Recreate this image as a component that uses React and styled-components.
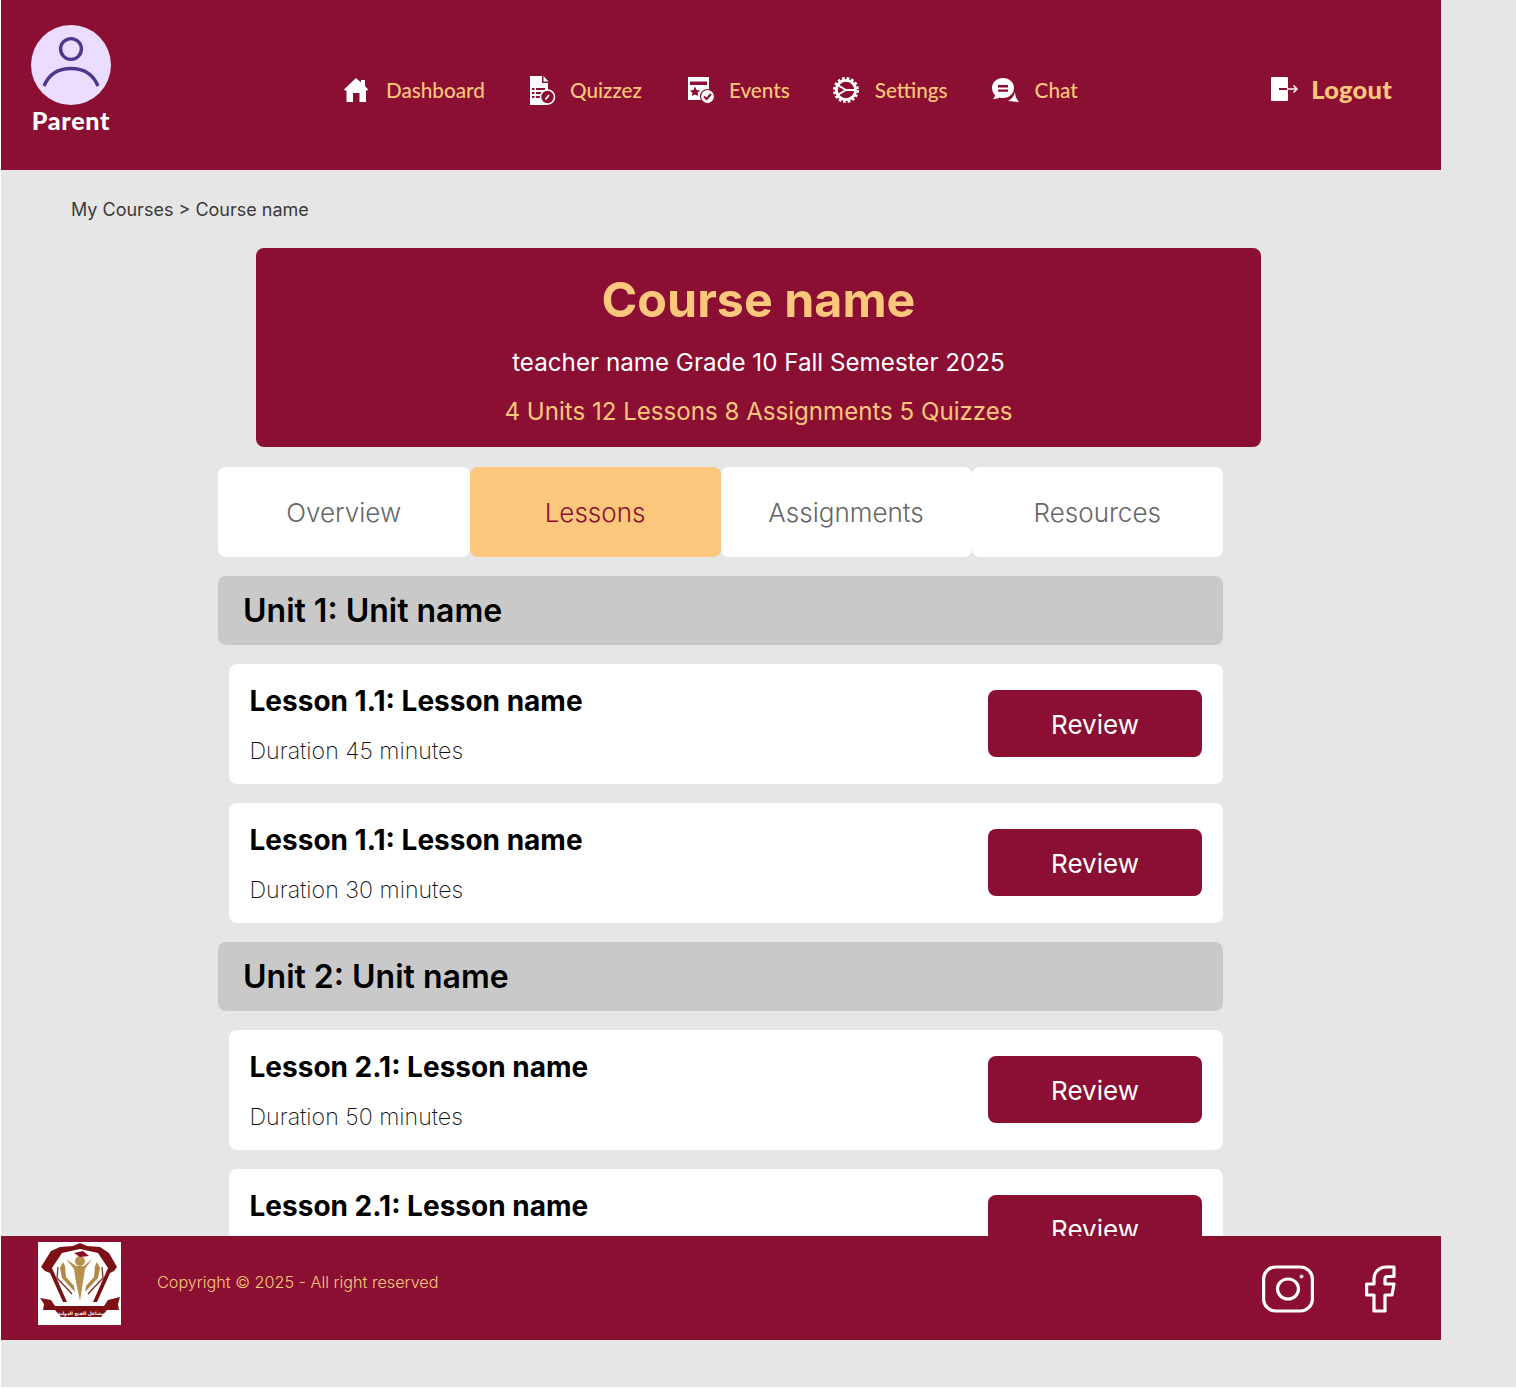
import React from "react";
import styled, { createGlobalStyle } from "styled-components";

const maroon = "#8a0f32";
const peach = "#fbc77c";

const Global = createGlobalStyle`
  html, body { margin: 0; padding: 0; background: #fff; }
  body { font-family: Inter, "Liberation Sans", sans-serif; }
  * { box-sizing: border-box; }
  svg { overflow: visible; flex-shrink: 0; }
`;

const Page = styled.div`
  margin-left: 1px;
  width: 1515px;
  height: 1387px;
  background: #e6e6e6;
  overflow: hidden;
`;

const Header = styled.header`
  width: 1440px;
  height: 170px;
  background: ${maroon};
  display: flex;
  align-items: flex-start;
  padding: 25px 49px 0 30px;
`;

const Profile = styled.div`
  width: 80px;
  display: flex;
  flex-direction: column;
  align-items: center;
`;

const Avatar = styled.div`
  width: 80px;
  height: 80px;
  border-radius: 50%;
  background: #eaddff;
  display: flex;
  align-items: center;
  justify-content: center;
`;

const Role = styled.div`
  font-family: Lato, sans-serif;
  font-weight: 900;
  font-size: 25px;
  letter-spacing: 0.7px;
  line-height: 30px;
  white-space: nowrap;
  color: #fff;
`;

const Nav = styled.nav`
  display: flex;
  align-items: center;
  gap: 43px;
  margin-left: 233px;
  margin-top: 50px;
`;

const NavItem = styled.a`
  display: flex;
  align-items: center;
  gap: 16px;
  font-family: Lato, sans-serif;
  font-weight: 500;
  font-size: 20.7px;
  line-height: 28px;
  color: ${peach};
`;

const Logout = styled.a`
  margin-left: auto;
  margin-top: 48px;
  display: flex;
  align-items: center;
  gap: 13px;
  font-family: Lato, sans-serif;
  font-weight: 900;
  font-size: 25.5px;
  letter-spacing: 0.2px;
  line-height: 32px;
  color: ${peach};
`;

const Main = styled.main`
  height: 1066px;
  overflow: hidden;
  padding-left: 217px;
`;

const Breadcrumb = styled.div`
  margin-left: -147px;
  padding-top: 29px;
  font-size: 18px;
  line-height: 22px;
  color: #3a3a3a;
`;

const CourseCard = styled.section`
  width: 1005px;
  height: 199px;
  margin: 27px 0 20px 38px;
  background: ${maroon};
  border-radius: 8px;
  display: flex;
  flex-direction: column;
  align-items: center;
  text-align: center;
`;

const CourseTitle = styled.h1`
  margin: 22px 0 0;
  font-size: 48.4px;
  line-height: 60px;
  font-weight: 700;
  color: ${peach};
`;

const CourseLine = styled.p`
  margin: ${(p) => p.$top}px 0 0;
  font-size: ${(p) => (p.$accent ? 24.1 : 24.2)}px;
  line-height: 30px;
  color: ${(p) => (p.$accent ? peach : "#fff")};
`;

const Tabs = styled.div`
  width: 1005px;
  display: grid;
  grid-template-columns: 251.5px 251px 251px 251.5px;
  margin-bottom: 19px;
`;

const Tab = styled.div`
  height: 90px;
  display: flex;
  align-items: center;
  justify-content: center;
  border-radius: 8px;
  font-size: 26px;
  font-weight: 300;
  background: ${(p) => (p.$active ? peach : "#fff")};
  color: ${(p) => (p.$active ? maroon : "#666")};
`;

const UnitBar = styled.h2`
  width: 1005px;
  height: 69px;
  margin: 0 0 19px;
  padding-left: 25px;
  display: flex;
  align-items: center;
  background: #c9c9c9;
  border-radius: 8px;
  font-size: 32px;
  font-weight: 600;
  color: #000;
`;

const LessonCard = styled.article`
  width: 994px;
  height: 120px;
  margin: 0 0 19px 11px;
  padding: 0 21px 0 20.5px;
  display: flex;
  align-items: flex-start;
  justify-content: space-between;
  background: #fff;
  border-radius: 8px;
`;

const LessonTitle = styled.h3`
  margin: 19px 0 0;
  font-size: 28px;
  line-height: 36px;
  font-weight: 700;
  color: #000;
`;

const Duration = styled.p`
  margin: 17px 0 0;
  font-size: 23.2px;
  line-height: 30px;
  font-weight: 200;
  color: #111;
`;

const ReviewButton = styled.button`
  width: 214px;
  height: 67px;
  margin-top: 26px;
  padding: 1px 0 0;
  border: 0;
  border-radius: 8px;
  background: ${maroon};
  color: #fff;
  font-family: inherit;
  font-size: 26px;
`;

const Footer = styled.footer`
  width: 1440px;
  height: 104px;
  background: ${maroon};
  display: flex;
  align-items: flex-start;
  padding: 6px 45px 0 37px;
`;

const Copyright = styled.span`
  margin: 28px 0 0 36px;
  font-size: 16.2px;
  line-height: 24px;
  font-weight: 300;
  color: ${peach};
`;

const Socials = styled.div`
  margin-left: auto;
  margin-top: 23px;
  display: flex;
  align-items: flex-start;
  gap: 51px;
`;

function HomeIcon() {
  return (
    <svg width="26" height="26" viewBox="0 0 26 26" fill="#fff">
      <path
        fillRule="evenodd"
        d="M12 1 L17 5.5 V3 H21 V9 L24 12.6 L23.2 13.5 H22 V25 H2.5 V13.5 H1 L0 12.6 Z M9 16 V25 H15.5 V16 Z"
      />
    </svg>
  );
}

function QuizIcon() {
  return (
    <svg width="26" height="30" viewBox="-1 0 26 30">
      <path d="M1 1 H13 V8 H19 V30 H1 Z" fill="#fff" />
      <path d="M14.5 1 L19.5 6.5 H14.5 Z" fill="#fff" />
      <path
        d="M3 13 h2.5 v2 H3 Z M7 13 h9 v2 H7 Z M3 17 h2.5 v2 H3 Z M7 17 h9 v2 H7 Z M3 21 h2.5 v2 H3 Z M7 21 h6 v2 H7 Z"
        fill={maroon}
      />
      <circle cx="18.5" cy="22" r="7" fill={maroon} stroke="#fff" strokeWidth="1.6" />
      <path d="M16.5 24.5 L20 20" stroke="#fff" strokeWidth="1.8" />
    </svg>
  );
}

function EventsIcon() {
  return (
    <svg width="28" height="28" viewBox="-3 0 28 28">
      <path d="M0 1 H21 V24 H0 Z" fill="#fff" />
      <path d="M2 5.5 H19 V9 H2 Z" fill={maroon} />
      <path d="M7 10.5 L8.6 14 L12 14.4 L9.6 16.8 L10.2 20 L7 18.4 L3.8 20 L4.4 16.8 L2 14.4 L5.4 14 Z" fill={maroon} />
      <circle cx="19.5" cy="20.5" r="7" fill="#fff" stroke={maroon} strokeWidth="1.2" />
      <path d="M16 20.5 L18.7 23 L23 18" fill="none" stroke={maroon} strokeWidth="2" />
    </svg>
  );
}

function GearIcon() {
  return (
    <svg width="26" height="26" viewBox="0 0 26 26" fill="none" stroke="#fff">
      <circle cx="13" cy="13" r="11.4" strokeWidth="3.2" strokeDasharray="2.6 1.9" />
      <circle cx="13" cy="13" r="9.6" strokeWidth="2.8" />
      <path d="M13 13 L4.5 8 M13 13 L4.5 18 M13 13 H22.5" strokeWidth="2" />
    </svg>
  );
}

function ChatIcon() {
  return (
    <svg width="28" height="26" viewBox="-1 0 28 26">
      <path d="M23 15 C23 20 26 24 27 25 L16 24 C20 22 22 19 23 15 Z" fill="#fff" />
      <path d="M11 1 C17.5 1 22 5.5 22 11 C22 16.5 17.5 21 11 21 C9.5 21 8.5 20.8 7.5 20.4 C5.5 21.5 3.5 22 1 22 C2.5 20.5 3 19 3 18 C1 16 0 13.5 0 11 C0 5.5 4.5 1 11 1 Z" fill="#fff" />
      <path d="M6 8 H16 V10.4 H6 Z M6 12.4 H16 V14.8 H6 Z" fill={maroon} />
    </svg>
  );
}

function LogoutIcon() {
  return (
    <svg width="27" height="26" viewBox="0 0 27 26">
      <rect x="0" y="1" width="17" height="24" rx="1" fill="#fff" />
      <path d="M8 13 H16" stroke={maroon} strokeWidth="2" />
      <path d="M16 13 H26 M22.5 9.5 L26 13 L22.5 16.5" fill="none" stroke="#fff" strokeWidth="1.5" />
    </svg>
  );
}

function InstagramIcon() {
  return (
    <svg width="52" height="48" viewBox="0 0 52 48" fill="none" stroke="#fff" strokeWidth="3.2">
      <rect x="1.6" y="2" width="48.8" height="44" rx="12" />
      <ellipse cx="26" cy="24" rx="10.5" ry="10" />
      <circle cx="39.5" cy="11.5" r="1.6" fill="#fff" strokeWidth="0.6" />
    </svg>
  );
}

function FacebookIcon() {
  return (
    <svg width="31" height="48" viewBox="0 0 31 48" fill="none" stroke="#fff" strokeWidth="3.2" strokeLinejoin="round">
      <path d="M29 2 H21 C14.5 2 9 7 9 14 V19 H1.6 V30 H9 V46 H20 V30 H27 L29 19 H20 V14 C20 12.5 21 11.5 22.5 11.5 H29 Z" />
    </svg>
  );
}

function SchoolLogo() {
  return (
    <svg width="83" height="83" viewBox="0 0 83 83">
      <rect width="83" height="83" fill="#fff" />
      <path
        fillRule="evenodd"
        d="M42 1 L49 4 L62 5 L71 11 L79 25 L76 29 L72 31 L59 60 L25 60 L12 31 L7 29 L3 25 L13 9 L22 5 L35 4 Z M42 7 L24 11 L14 26 L29 60 L55 60 L70 26 L60 11 Z"
        fill="#7d1015"
      />
      <path d="M25 20 L22 26 L24 36 L37 50 L36 44 L28 35 L27 24 Z M59 20 L62 26 L60 36 L47 50 L48 44 L56 35 L57 24 Z" fill="#b08a45" />
      <path d="M20 25 L19 36 L34 52 M64 25 L65 36 L50 52" fill="none" stroke="#8c2a20" strokeWidth="1.3" />
      <path d="M28 17 L36 27 L38 40 L42 59 L45 40 L47 27 L54 17 L46 24 H38 Z" fill="#b8914f" />
      <circle cx="42" cy="19" r="5" fill="#b8914f" />
      <path d="M36 11 L45 9 L51 14 L42 15 Z" fill="#8a1020" />
      <path d="M2 56 L13 58 L17 64 L66 64 L70 58 L82 55 L80 62 L81 68 L69 68 L63 75 L23 75 L17 68 L5 68 L6 62 Z" fill="#7d1015" />
      <text x="43" y="72.5" textAnchor="middle" fontFamily="DejaVu Sans, sans-serif" fontSize="4.6" fontWeight="700" fill="#fff">
        مشاعل الفتح الدولية
      </text>
    </svg>
  );
}

const NAV = [
  { label: "Dashboard", Icon: HomeIcon },
  { label: "Quizzez", Icon: QuizIcon },
  { label: "Events", Icon: EventsIcon },
  { label: "Settings", Icon: GearIcon },
  { label: "Chat", Icon: ChatIcon },
];

const UNITS = [
  {
    title: "Unit 1: Unit name",
    lessons: [
      { title: "Lesson 1.1: Lesson name", duration: "Duration 45 minutes" },
      { title: "Lesson 1.1: Lesson name", duration: "Duration 30 minutes" },
    ],
  },
  {
    title: "Unit 2: Unit name",
    lessons: [
      { title: "Lesson 2.1: Lesson name", duration: "Duration 50 minutes" },
      { title: "Lesson 2.1: Lesson name", duration: "Duration 40 minutes" },
    ],
  },
];

export default function App() {
  return (
    <Page>
      <Global />
      <Header>
        <Profile>
          <Avatar>
            <svg width="60" height="60" viewBox="0 0 60 60" fill="none" stroke="#4f378b" strokeWidth="3.4">
              <circle cx="30" cy="14" r="10.4" />
              <path d="M3 51 C8 39 18 33.5 30 33.5 C42 33.5 52 39 57 51" />
            </svg>
          </Avatar>
          <Role>Parent</Role>
        </Profile>
        <Nav>
          {NAV.map(({ label, Icon }) => (
            <NavItem key={label}>
              <Icon />
              {label}
            </NavItem>
          ))}
        </Nav>
        <Logout>
          <LogoutIcon />
          Logout
        </Logout>
      </Header>

      <Main>
        <Breadcrumb>My Courses &gt; Course name</Breadcrumb>
        <CourseCard>
          <CourseTitle>Course name</CourseTitle>
          <CourseLine $top={18}>teacher name Grade 10 Fall Semester 2025</CourseLine>
          <CourseLine $top={19} $accent>
            4 Units 12 Lessons 8 Assignments 5 Quizzes
          </CourseLine>
        </CourseCard>
        <Tabs>
          <Tab>Overview</Tab>
          <Tab $active>Lessons</Tab>
          <Tab>Assignments</Tab>
          <Tab>Resources</Tab>
        </Tabs>
        {UNITS.map((unit) => (
          <React.Fragment key={unit.title}>
            <UnitBar>{unit.title}</UnitBar>
            {unit.lessons.map((lesson) => (
              <LessonCard key={lesson.duration}>
                <div>
                  <LessonTitle>{lesson.title}</LessonTitle>
                  <Duration>{lesson.duration}</Duration>
                </div>
                <ReviewButton>Review</ReviewButton>
              </LessonCard>
            ))}
          </React.Fragment>
        ))}
      </Main>

      <Footer>
        <SchoolLogo />
        <Copyright>Copyright © 2025 - All right reserved</Copyright>
        <Socials>
          <InstagramIcon />
          <FacebookIcon />
        </Socials>
      </Footer>
    </Page>
  );
}
